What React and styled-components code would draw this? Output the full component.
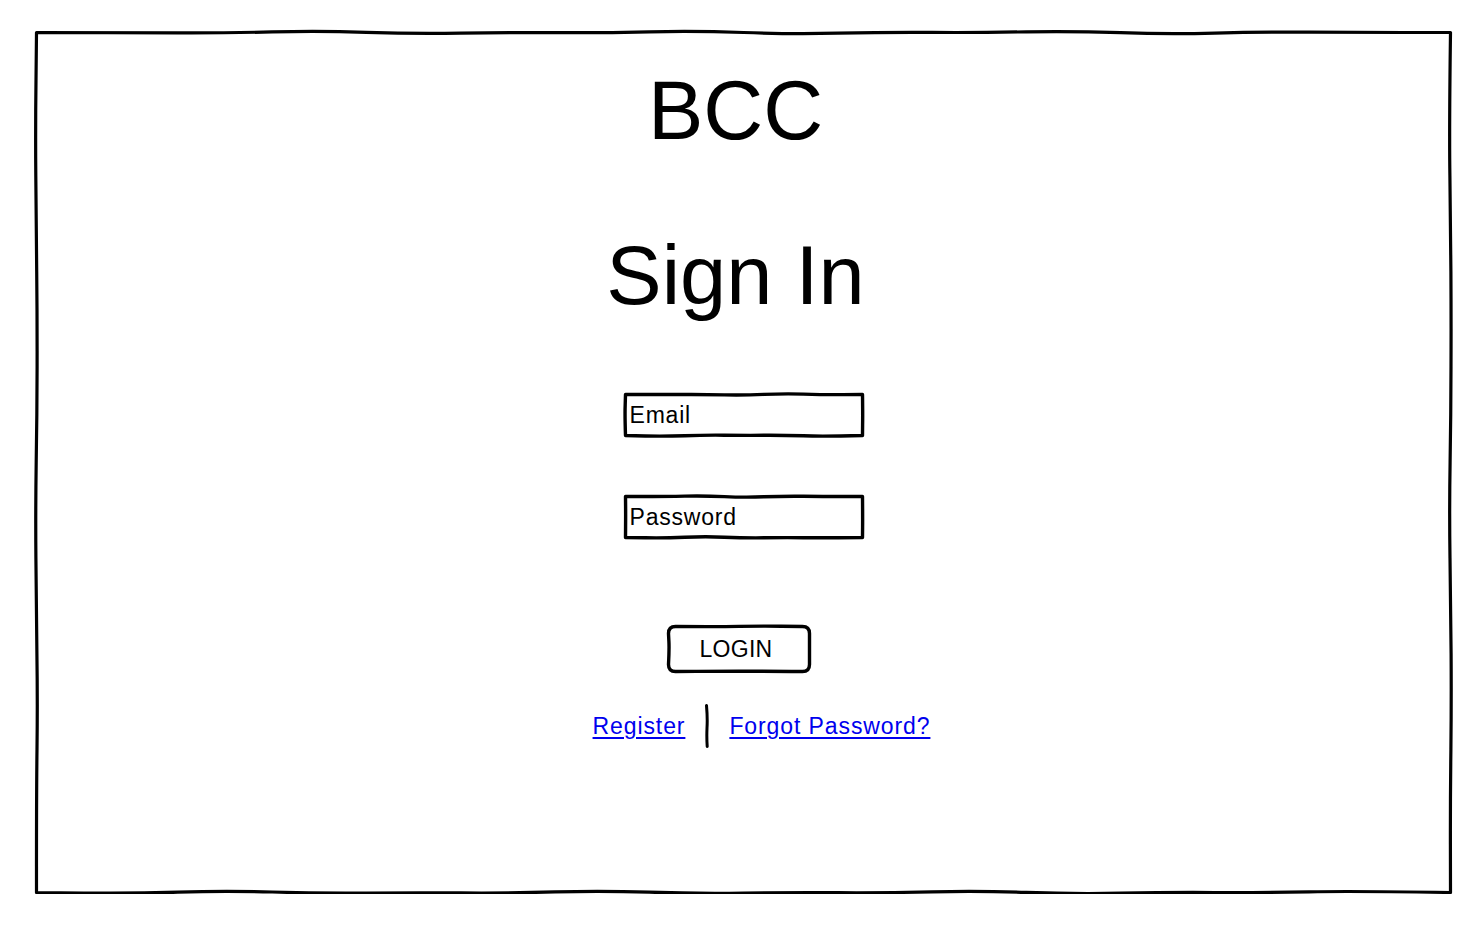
import styled, { createGlobalStyle } from "styled-components";

const GlobalStyle = createGlobalStyle`
  html, body {
    margin: 0;
    padding: 0;
    background: #ffffff;
  }
  body {
    font-family: "Liberation Sans", Arial, Helvetica, sans-serif;
    color: #000;
  }
`;

// hand drawn line: points along the segment pushed a little off the line,
// joined with quadratic curves so it looks wobbly
function sketchLine(x1, y1, x2, y2, seed, amp = 1.4, step = 110) {
  const dx = x2 - x1;
  const dy = y2 - y1;
  const len = Math.hypot(dx, dy);
  const n = Math.max(2, Math.round(len / step));
  const nx = -dy / len;
  const ny = dx / len;
  const pts = [];
  for (let i = 0; i <= n; i++) {
    const t = i / n;
    const off = i === 0 || i === n ? 0 : amp * Math.sin(seed * 12.9898 + i * 2.37) * Math.cos(i * 0.71 + seed);
    pts.push([x1 + dx * t + nx * off, y1 + dy * t + ny * off]);
  }
  let d = "";
  for (let i = 1; i < pts.length - 1; i++) {
    const mx = (pts[i][0] + pts[i + 1][0]) / 2;
    const my = (pts[i][1] + pts[i + 1][1]) / 2;
    d += ` Q ${pts[i][0].toFixed(1)} ${pts[i][1].toFixed(1)} ${mx.toFixed(1)} ${my.toFixed(1)}`;
  }
  d += ` L ${pts[n][0].toFixed(1)} ${pts[n][1].toFixed(1)}`;
  return d;
}

function rectPath(w, h, inset, seed, amp, step) {
  const a = inset;
  const r = w - inset;
  const b = h - inset;
  return (
    `M ${a} ${a}` +
    sketchLine(a, a, r, a, seed, amp, step) +
    sketchLine(r, a, r, b, seed + 1, amp, step) +
    sketchLine(r, b, a, b, seed + 2, amp, step) +
    sketchLine(a, b, a, a, seed + 3, amp, step) +
    " Z"
  );
}

function roundRectPath(w, h, inset, rad, seed) {
  const a = inset;
  const r = w - inset;
  const b = h - inset;
  return (
    `M ${a + rad} ${a}` +
    sketchLine(a + rad, a, r - rad, a, seed, 1.2, 45) +
    ` Q ${r} ${a} ${r} ${a + rad}` +
    sketchLine(r, a + rad, r, b - rad, seed + 1, 0.8, 20) +
    ` Q ${r} ${b} ${r - rad} ${b}` +
    sketchLine(r - rad, b, a + rad, b, seed + 2, 1.0, 45) +
    ` Q ${a} ${b} ${a} ${b - rad}` +
    sketchLine(a, b - rad, a, a + rad, seed + 3, 1.0, 18) +
    ` Q ${a} ${a} ${a + rad} ${a}`
  );
}

const Frame = styled.main`
  position: relative;
  box-sizing: border-box;
  width: 1417px;
  height: 863px;
  margin: 31px 0 0 35px;
  padding-top: 38px;
  display: flex;
  flex-direction: column;
  align-items: center;
`;

const Outline = styled.svg`
  position: absolute;
  top: 0;
  left: 0;
  overflow: visible;
  pointer-events: none;
`;

const Title = styled.h1`
  margin: ${(p) => p.top}px 0 0 ${(p) => p.shift || 0}px;
  font-size: 83px;
  line-height: 84px;
  font-weight: 400;
  white-space: nowrap;
`;

const Field = styled.div`
  position: relative;
  box-sizing: border-box;
  width: 240px;
  height: 44px;
  margin-top: ${(p) => p.top}px;
  padding-left: 6px;
  font-size: 23px;
  letter-spacing: 0.8px;
  line-height: 44px;
`;

const Button = styled.button`
  position: relative;
  box-sizing: border-box;
  width: 144px;
  height: 48px;
  margin: ${(p) => p.top}px 0 0 -9px;
  padding: 0 6px 0 0;
  border: 0;
  background: transparent;
  font-family: inherit;
  font-size: 23px;
  letter-spacing: 0.3px;
  line-height: 48px;
  color: #000;
  cursor: pointer;
`;

const LinkRow = styled.nav`
  display: flex;
  align-items: center;
  gap: 19px;
  height: 44px;
  margin: 31px 0 0 36px;
`;

const Link = styled.a`
  font-size: 23px;
  letter-spacing: 0.9px;
  line-height: 44px;
  color: #0000ee;
  text-decoration: underline;
  text-underline-offset: 3px;
  text-decoration-thickness: 1.5px;
`;

function SketchField({ top, children }) {
  return (
    <Field top={top}>
      {children}
      <Outline width="240" height="44">
        <path d={rectPath(240, 44, 1.5, top * 0.13, 1.1, 40)} fill="none" stroke="#000" strokeWidth="3.4" strokeLinejoin="round" />
      </Outline>
    </Field>
  );
}

function App() {
  return (
    <>
      <GlobalStyle />
      <Frame>
        <Outline width="1417" height="863">
          <path d={rectPath(1417, 863, 1.5, 4.2, 2, 95)} fill="none" stroke="#000" strokeWidth="3.2" strokeLinejoin="round" />
        </Outline>

        <Title top={0} shift={-16}>BCC</Title>
        <Title top={81} shift={-16}>Sign In</Title>

        <SketchField top={75}>Email</SketchField>
        <SketchField top={58}>Password</SketchField>

        <Button top={86}>
          LOGIN
          <Outline width="144" height="48">
            <path d={roundRectPath(144, 48, 1.5, 7, 2.7)} fill="none" stroke="#000" strokeWidth="3.4" strokeLinejoin="round" />
          </Outline>
        </Button>

        <LinkRow>
          <Link href="#">Register</Link>
          <svg width="6" height="44" viewBox="0 0 6 44">
            <path d="M 2.5 1.5 Q 3.6 14 3 24 Q 2.6 34 3.2 42.5" fill="none" stroke="#000" strokeWidth="3" strokeLinecap="round" />
          </svg>
          <Link href="#">Forgot Password?</Link>
        </LinkRow>
      </Frame>
    </>
  );
}

export default App;
